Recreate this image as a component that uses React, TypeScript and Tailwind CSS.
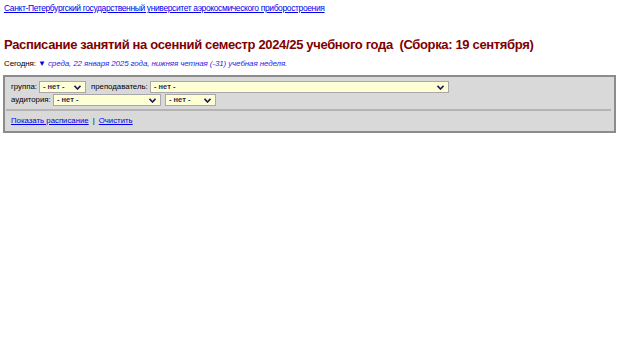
const Chevron = () => (
  <svg width="7" height="5" viewBox="0 0 7 5" className="shrink-0">
    <path d="M0.5 0.8 L3.5 4 L6.5 0.8" fill="none" stroke="#1a1a5a" strokeWidth="1.6" />
  </svg>
);

function Select({ width }: { width: string }) {
  return (
    <div
      className={`${width} h-[12px] flex items-center justify-between bg-[#ffffd6] border border-[#a8a8a8] pl-[3px] pr-[4px] text-[7.5px] font-bold text-[#2a2a55]`}
    >
      <span>- нет -</span>
      <Chevron />
    </div>
  );
}

export default function App() {
  return (
    <div className="w-[620px] h-[343px] bg-white font-['Liberation_Sans',Arial,sans-serif] px-[4px] pt-[2px]">
      <a href="#" className="text-[8.5px] tracking-[-0.38px] text-[#0000ee] underline leading-[12px] block whitespace-nowrap">
        Санкт-Петербургский государственный университет аэрокосмического приборостроения
      </a>

      <h1 className="mt-[23px] text-[13px] tracking-[-0.34px] font-bold text-[#800000] leading-[16px] whitespace-nowrap">
        Расписание занятий на осенний семестр 2024/25 учебного года&nbsp; (Сборка: 19 сентября)
      </h1>

      <div className="mt-[5px] text-[8px] tracking-[-0.12px] leading-[12px] whitespace-nowrap">
        <span className="text-black">Сегодня: </span>
        <span className="text-[#0000ee]">▼</span>{' '}
        <i className="text-[#1f1fe8]">среда, 22 января 2025 года, нижняя четная (-31) учебная неделя.</i>
      </div>

      <div className="mt-[5px] w-[613px] -ml-[1px] bg-[#d9d9d9] border-2 border-[#8c8c8c] text-[7.8px] text-black">
        <div className="px-[6px] pt-[4px] pb-[3px] flex flex-col gap-[1px]">
          <div className="flex items-center">
            <span className="w-[28px]">группа:</span>
            <Select width="w-[47px]" />
            <span className="ml-[5px] w-[59px]">преподаватель:</span>
            <Select width="w-[299px]" />
          </div>
          <div className="flex items-center">
            <span className="w-[42px]">аудитория:</span>
            <Select width="w-[108px]" />
            <span className="ml-[4px]" />
            <Select width="w-[51px]" />
          </div>
        </div>
        <div className="mx-[1px] mr-[3px] border-t-2 border-[#b4b4b4]" />
        <div className="px-[6px] pt-[4px] pb-[4px] flex items-center gap-[4px] leading-[12px]">
          <a href="#" className="text-[#0000ee] underline">Показать расписание</a>
          <span>|</span>
          <a href="#" className="text-[#0000ee] underline">Очистить</a>
        </div>
      </div>
    </div>
  );
}
